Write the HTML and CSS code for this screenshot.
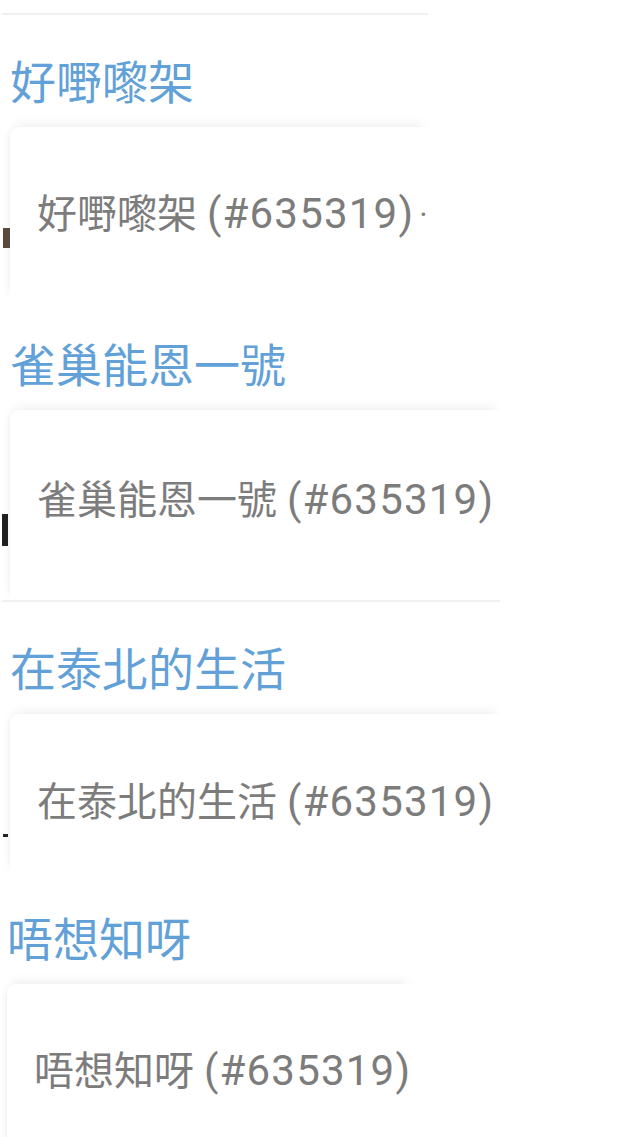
FILE: index.html
```html
<!DOCTYPE html>
<html lang="zh-HK">
<head>
<meta charset="UTF-8" />
<meta name="viewport" content="width=device-width, initial-scale=1" />
<title>Posts</title>
<link rel="stylesheet" href="styles.css">
</head>
<body>
<main class="feed">

  <!-- 好嘢嚟架 -->
  <section class="post post--rule post--w428">
    <h2 class="post-title">好嘢嚟架</h2>
    <div class="post-card">
      <p class="post-text">好嘢嚟架 <span class="post-id">(#635319)</span><span class="post-more">·</span></p>
    </div>
    <span class="post-mark mark-1"></span>
  </section>

  <!-- 雀巢能恩一號 -->
  <section class="post post--w500">
    <h2 class="post-title">雀巢能恩一號</h2>
    <div class="post-card post-card--tall">
      <p class="post-text">雀巢能恩一號 <span class="post-id">(#635319)</span></p>
    </div>
    <span class="post-mark mark-2"></span>
  </section>

  <!-- 在泰北的生活 -->
  <section class="post post--rule post--w500">
    <h2 class="post-title">在泰北的生活</h2>
    <div class="post-card post-card--short">
      <p class="post-text">在泰北的生活 <span class="post-id">(#635319)</span></p>
    </div>
    <span class="post-mark mark-3"></span>
  </section>

  <!-- 唔想知呀 -->
  <section class="post post--w415 post--shift">
    <h2 class="post-title">唔想知呀</h2>
    <div class="post-card post-card--low">
      <p class="post-text">唔想知呀 <span class="post-id">(#635319)</span></p>
    </div>
  </section>

</main>
</body>
</html>
```

FILE: styles.css
```css
body {
  margin: 0;
  background: #fff;
  font-family: Roboto, "Noto Sans CJK TC", "Noto Sans CJK SC", sans-serif;
}

.feed {
  padding-top: 13px;
}

/* one post: title + card */
.post {
  position: relative;
  margin-left: 2px;
  overflow: hidden;
}
.post--rule {
  border-top: 2px solid #f0f0f0;
}
.post--w428 { width: 426px; }
.post--w500 { width: 498px; }
.post--w415 { width: 413px; }
.post--shift { margin-left: -1px; }

.post-title {
  margin: 39px 0 0 0;
  padding-left: 8px;
  font-size: 46px;
  line-height: 56px;
  font-weight: 400;
  color: #62a1d8;
  white-space: nowrap;
}
.post--rule .post-title {
  margin-top: 40px;
}

.post-card {
  margin: 16px 0 0 8px;
  padding: 63px 0 60px 27px;
  background: #fff;
  border-top-left-radius: 9px;
  box-shadow: 0 -7px 12px -5px rgba(0, 0, 0, 0.07),
              -5px 0 8px -5px rgba(0, 0, 0, 0.07);
}
.post-card--tall { padding-top: 66px; padding-bottom: 75px; }
.post-card--short { padding-top: 64px; padding-bottom: 46px; }
.post-card--low { padding-top: 63px; }

.post-text {
  margin: 0;
  font-size: 40px;
  line-height: 48px;
  color: #7c7c7c;
  white-space: nowrap;
}
.post-id {
  font-size: 42px;
  letter-spacing: 1.2px;
}
.post-more {
  margin-left: 5px;
  font-size: 32px;
  vertical-align: 2px;
}

/* small dark ticks in the left gutter */
.post-mark {
  position: absolute;
  left: 1px;
  width: 7px;
}
.mark-1 { top: 213px; height: 20px; background: #5b4a3b; }
.mark-2 { top: 215px; height: 32px; left: 0; width: 6px; background: #1e1e1e; }
.mark-3 { top: 232px; height: 3px; width: 5px; background: #222; }
```
